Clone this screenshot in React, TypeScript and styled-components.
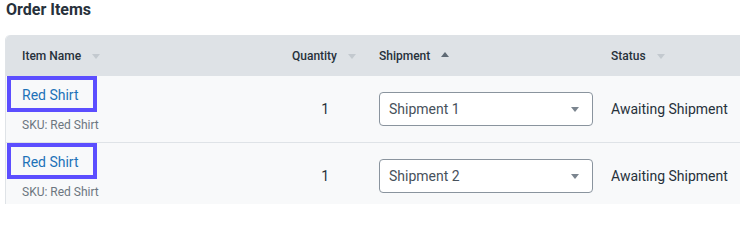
import React from "react";
import styled, { createGlobalStyle } from "styled-components";

const Global = createGlobalStyle`
  html, body { margin: 0; padding: 0; background: #ffffff; overflow: hidden; }
  body { font-family: Roboto, "Noto Sans", Arial, sans-serif; color: #27313b; }
`;

const Page = styled.div`
  width: 740px;
  height: 204px;
  overflow: hidden;
`;

const Title = styled.h2`
  margin: 0;
  padding: 0 0 0 6px;
  height: 35px;
  font-size: 16px;
  font-weight: 700;
  line-height: 20px;
  color: #27313b;
`;

const Table = styled.div`
  margin-left: 5px;
  width: 760px;
  display: grid;
  grid-template-columns: 244px 113px 232px 1fr;
  border-left: 1px solid #dfe3e7;
  border-top-left-radius: 5px;
  background: #f8f9fa;
`;

const HeadCell = styled.div<{ $right?: boolean; $first?: boolean }>`
  height: 41px;
  background: #dee2e6;
  display: flex;
  align-items: center;
  justify-content: ${(p) => (p.$right ? "flex-end" : "flex-start")};
  padding: ${(p) => (p.$right ? "0 7px 0 0" : "0 0 0 16px")};
  font-size: 12px;
  font-weight: 500;
  color: #27313b;
  gap: 11px;
  border-top-left-radius: ${(p) => (p.$first ? "5px" : "0")};
`;

const Sort = styled.span<{ $up?: boolean; $active?: boolean }>`
  width: 0;
  height: 0;
  border-left: 4px solid transparent;
  border-right: 4px solid transparent;
  ${(p) =>
    p.$up
      ? `border-bottom: 5px solid ${p.$active ? "#5f6a75" : "#c3c9cf"};`
      : `border-top: 5px solid ${p.$active ? "#5f6a75" : "#c3c9cf"};`}
  margin-top: ${(p) => (p.$up ? "-2px" : "1px")};
`;

const Cell = styled.div<{ $right?: boolean; $last?: boolean }>`
  height: 66px;
  display: flex;
  align-items: center;
  justify-content: ${(p) => (p.$right ? "flex-end" : "flex-start")};
  padding: ${(p) => (p.$right ? "0 34px 0 0" : "0 0 0 16px")};
  border-bottom: ${(p) => (p.$last ? "none" : "1px solid #dfe3e7")};
  font-size: 14px;
  color: #27313b;
`;

const NameCell = styled.div<{ $last?: boolean }>`
  height: 66px;
  display: flex;
  flex-direction: column;
  align-items: flex-start;
  padding-left: 1px;
  border-bottom: ${(p) => (p.$last ? "none" : "1px solid #dfe3e7")};
`;

const ItemLink = styled.a`
  box-sizing: border-box;
  display: flex;
  align-items: center;
  width: 90px;
  height: 36px;
  padding: 2px 0 0 11px;
  border: 4px solid #5c4eff;
  font-size: 14px;
  color: #1d72b8;
  text-decoration: none;
  background: #f8f9fa;
`;

const Sku = styled.div`
  margin-top: 6px;
  padding-left: 15px;
  font-size: 12px;
  line-height: 14px;
  color: #6c7680;
`;

const Select = styled.div`
  box-sizing: border-box;
  width: 214px;
  height: 34px;
  border: 1px solid #8a949e;
  border-radius: 4px;
  background: #ffffff;
  display: flex;
  align-items: center;
  justify-content: space-between;
  padding: 0 13px 0 9px;
  font-size: 14px;
  color: #47515b;
`;

const Caret = styled.span`
  width: 0;
  height: 0;
  border-left: 4px solid transparent;
  border-right: 4px solid transparent;
  border-top: 5px solid #7b858f;
`;

const rows = [
  { name: "Red Shirt", sku: "Red Shirt", qty: 1, shipment: "Shipment 1", status: "Awaiting Shipment" },
  { name: "Red Shirt", sku: "Red Shirt", qty: 1, shipment: "Shipment 2", status: "Awaiting Shipment" },
];

export default function App() {
  return (
    <Page>
      <Global />
      <Title>Order Items</Title>
      <Table>
        <HeadCell $first>
          Item Name <Sort />
        </HeadCell>
        <HeadCell $right>
          Quantity <Sort />
        </HeadCell>
        <HeadCell>
          Shipment <Sort $up $active />
        </HeadCell>
        <HeadCell>
          Status <Sort />
        </HeadCell>
        {rows.map((r, i) => {
          const last = i === rows.length - 1;
          return (
            <React.Fragment key={i}>
              <NameCell $last={last}>
                <ItemLink href="#">{r.name}</ItemLink>
                <Sku>SKU: {r.sku}</Sku>
              </NameCell>
              <Cell $right $last={last}>{r.qty}</Cell>
              <Cell $last={last}>
                <Select>
                  <span>{r.shipment}</span>
                  <Caret />
                </Select>
              </Cell>
              <Cell $last={last}>{r.status}</Cell>
            </React.Fragment>
          );
        })}
      </Table>
    </Page>
  );
}
